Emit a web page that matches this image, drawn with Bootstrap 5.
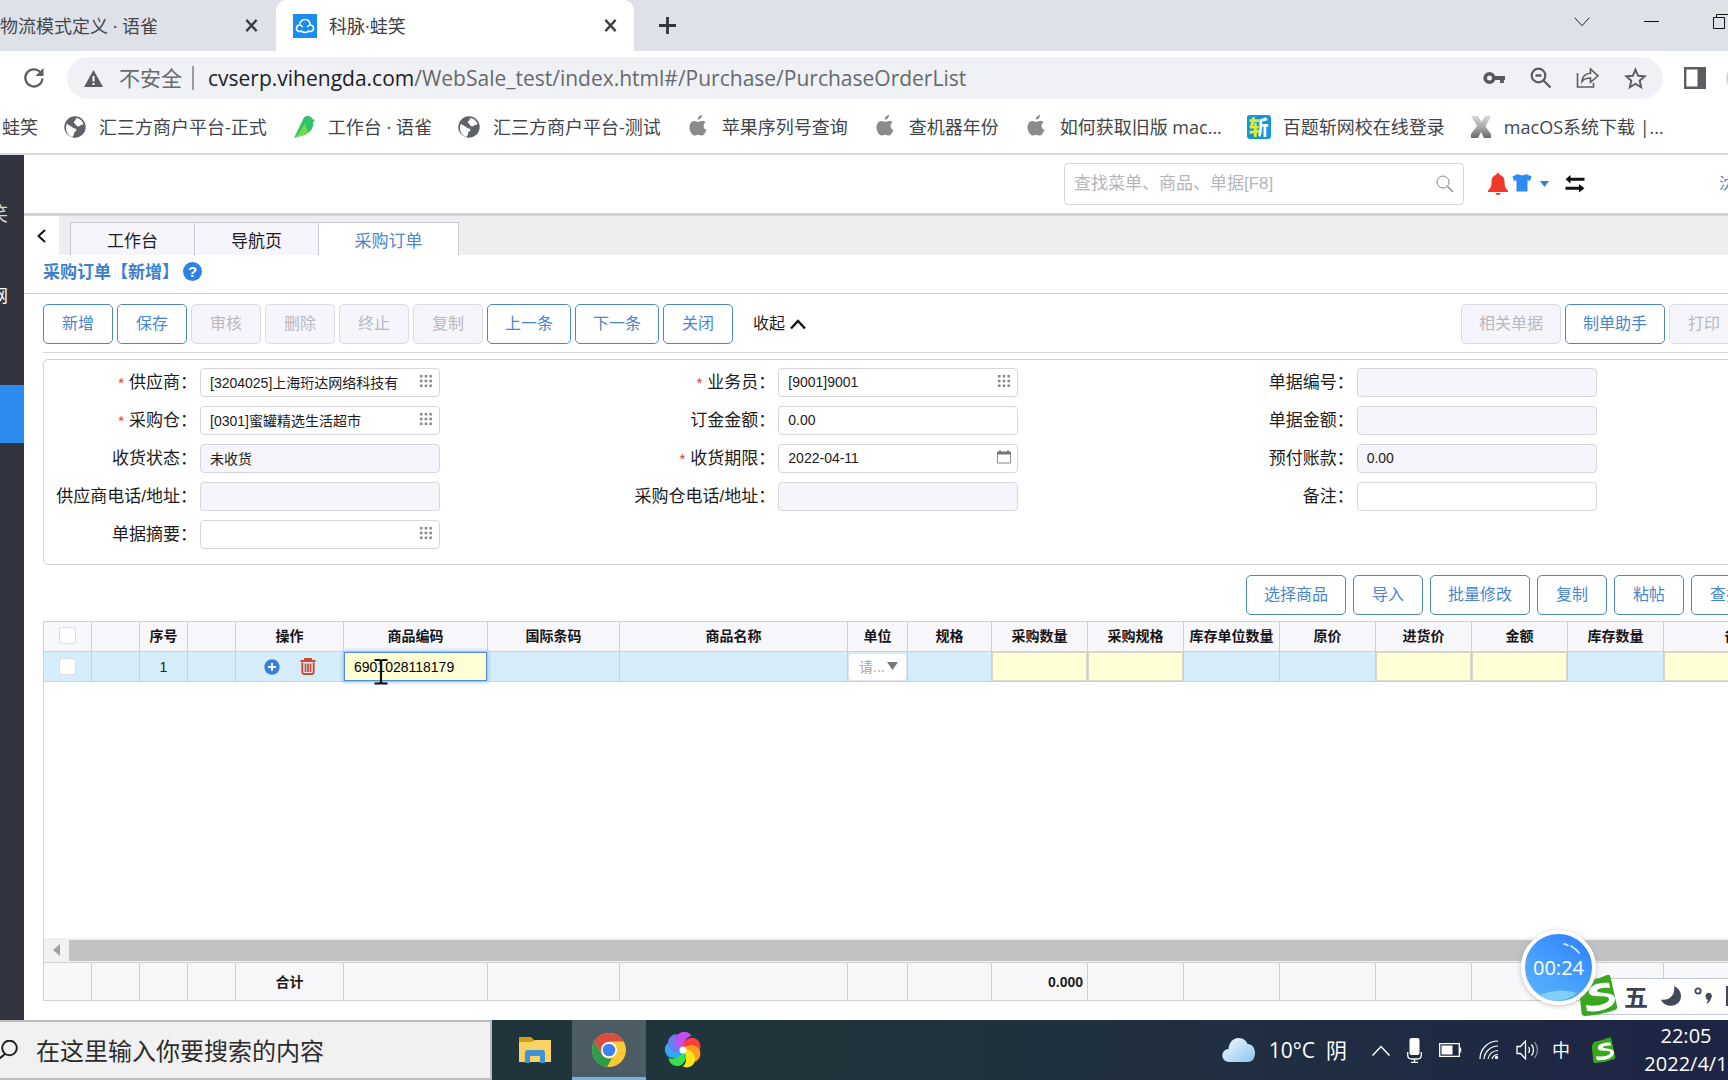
<!DOCTYPE html>
<html lang="zh-CN">
<head>
<meta charset="utf-8">
<meta name="viewport" content="width=device-width, initial-scale=1">
<title>科脉·蛙笑</title>
<link href="https://cdn.jsdelivr.net/npm/bootstrap@5.3.0/dist/css/bootstrap.min.css" rel="stylesheet">
<style>
:root{--ui:"Open Sans","Noto Sans CJK SC",sans-serif;--app:"Liberation Sans","Noto Sans CJK SC",sans-serif;--blue:#4a86cf;--line:#d0d0d6}
body{height:100vh;min-height:720px;overflow:hidden;font-family:var(--app);font-size:16px;line-height:24px;color:#1c1c20;background:#fff}
svg{display:block;flex:none}
button.bare{border:0;background:none;padding:0;color:inherit;display:flex;align-items:center;justify-content:center}
a{color:inherit;text-decoration:none}
/* browser frame */
.tabstrip{height:51px;background:#dee1e8;font:18px/24px var(--ui);color:#44474c}
.tabstrip .site{height:51px}
.tabstrip .site.first{width:276px;padding-right:17px}
.tabstrip .site.current{width:358px;background:#fff;border-radius:11px 11px 0 0;padding:0 16px 0 17px;color:#3c4043}
.tabstrip .wins{gap:54px}
.favico{width:24px;height:24px;background:#1a8df0}
.urlrow{height:54px;font:21px/28px var(--ui)}
.urlrow .reload{margin:0 21px 0 22px}
.omni{height:42px;border-radius:21px;background:#f0f1f4;margin-right:21px;padding:0 16px 0 17px}
.omni .rule{width:2px;height:24px;background:#9a9da1;margin:0 14px 0 10px}
.omni .host{color:#202124}
.omni .addr{color:#66696d;white-space:nowrap}
.marks{height:50px;gap:25px;border-bottom:2px solid #d9d9da;font:18px/24px var(--ui);color:#414549;white-space:nowrap;overflow:hidden;padding:0 0 4px 2px}
.marks a{display:flex;align-items:center;gap:12px}
.zhan{width:24px;height:24px;border-radius:3px;background:#1497d8;font:900 20px/24px "Noto Sans CJK SC",sans-serif;text-align:center}
.zhan span{background:linear-gradient(90deg,#d9ee3a 50%,#fff 50%);-webkit-background-clip:text;background-clip:text;color:transparent}
/* application */
.rail{width:24px;background:#32353f;color:#fff;overflow:hidden;flex:none}
.rail a{display:flex;justify-content:flex-end;align-items:center;height:58px;padding-right:16px;font-size:17px;white-space:nowrap}
.rail .brand{margin-top:31px;font-size:19px;color:#d5d6da}
.rail .net{margin-top:24px}
.rail .on{background:#2d8cf0;margin-top:59px}
.stage{min-width:0;overflow:hidden}
.topbar{height:58px;background:#fff}
.finder{width:400px;height:42px;border:1px solid #d4d4da;border-radius:4px;padding:0 9px 0 8px}
.finder input{border:0;outline:0;background:none;font-size:17px;width:100%;min-width:0;color:#333;padding:0 1px}
.finder input::placeholder{color:#b4b4ba;opacity:1}
.topbar .who{width:9px;color:#4a86cf;margin-left:134px;flex:none;overflow:hidden}
.worktabs{height:42px;background:#f0edf1;border-top:3px solid #d3d1d4;font-size:17px}
.worktabs .back{width:35px;background:#fff;margin-right:11px}
.worktabs .wt{height:33px;align-self:flex-end;width:124px;padding-top:5px;border:1px solid #c9c7cf;border-bottom:0;border-right:0;background:#f6f5fb;display:flex;align-items:center;justify-content:center;color:#1c1c20}
.worktabs .wt.on{width:141px;background:#fff;border-right:1px solid #c9c7cf;color:var(--blue)}
.titlebar{height:39px;border-bottom:1px solid var(--line);padding:0 0 2px 19px;font-size:17px;font-weight:700;color:#3c80cc}
.help{width:19px;height:19px;border-radius:50%;background:#2f82e4;color:#fff;font:700 15px/19px var(--app);text-align:center;margin:0 0 3px 4px}
.bench{margin:0 -52px 0 19px;min-height:0}
.act{height:40px;min-width:70px;padding:0 17px;border:1px solid #5088b5;border-radius:5px;background:#fff;color:var(--blue);font-size:16px;line-height:24px;--bs-btn-disabled-opacity:1}
.act:disabled{border-color:#dcdbe2;background:#f6f5fb;color:#b9b8c0}
.tools{padding:10px 41px 8px 0;border-bottom:1px solid #dadade;gap:4px}
.sheet{margin-top:6px;border:1px solid var(--line);border-radius:5px;padding:8px 0 15px}
.fields{display:flex;flex-direction:column;gap:9px}
.fld{display:flex;align-items:center;height:29px}
.fld label{width:156px;padding-right:3px;text-align:right;font-size:17px;white-space:nowrap;flex:none}
.fld label i{color:#c8412f;font-style:normal;font-size:15px;margin-right:5px}
.inp{position:relative;width:240px}
.inp input{display:block;width:100%;height:29px;border:1px solid #d7d6dd;border-radius:4px;padding:0 30px 2px 9px;font-size:14px;line-height:20px;color:#1c1c20;background:#fff;outline:0}
.inp input:read-only{background:#f6f5fb}
.inp button{position:absolute;right:7px;top:6px}
.tools2{gap:7px;padding:10px 19px 6px 0}
.gridbox{border:1px solid var(--line);border-right:0;margin-bottom:19px;min-height:0;overflow:hidden}
.gt{width:1770px;table-layout:fixed;border-collapse:separate;border-spacing:0;font-size:14px;line-height:20px;flex:none}
.gt th,.gt td{height:30px;padding:0;text-align:center;border-right:1px solid #cfced6;border-bottom:1px solid #cfced6;white-space:nowrap}
.gt th{background:#f8f7fb;font-weight:700;color:#141418;padding-bottom:2px}
.gt tbody td{background:#d6edfc}
.gt tbody td.ed{background:#feffd5}
.gt.sum tbody td{height:37px;background:#f8f7fa;font-weight:700;border-bottom:0}
.gt input[type=checkbox]{appearance:none;display:block;margin:0 auto;width:17px;height:17px;border:1px solid #dddde2;border-radius:3px;background:#fff}
.gt td.ed input{display:block;width:100%;height:29px;border:1px solid #d9d9cf;background:#feffd5;padding:0 9px;font-size:14px;outline:0}
.gt td.ed input.live{border:1px solid #4f8ed0;box-shadow:0 0 4px 1px #8fc4f4;position:relative}
.unit{position:relative}
.unit select{appearance:none;display:block;width:100%;height:28px;border:1px solid #e2e2e8;border-radius:4px;background:#fff;color:#a5a5ad;font-size:14px;padding:0 0 0 10px}
.unit svg{position:absolute;right:9px;top:9px;pointer-events:none}
.hbar{height:25px;background:#f1f0f2;border-bottom:1px solid var(--line);flex:none}
.hbar button{width:25px}
.hbar .thumb{height:21px;background:#c1c1c1}
/* desktop */
.taskbar{height:60px;background:linear-gradient(90deg,#20343b,#20343b 45%,#1f2c42 80%,#1d2445);color:#fff;font:21px/28px var(--ui);flex:none}
.seek{width:492px;background:#f1f1f1;border:2px solid #bdbdbd;border-left:0;margin-right:6px}
.seek input{border:0;background:none;outline:0;width:100%;font:24px/30px var(--ui);padding:2px 0 0 2px}
.seek input::placeholder{color:#2c2c2c;opacity:1}
.task{height:60px;width:74px}
.task.on{background:#4c5c65;border-bottom:3px solid #76b2e0!important;padding-top:3px!important}
.tray{gap:17px}
.tray .temp{margin:0 8px 0 -4px}
.tray .lang{font-size:18px;margin:0 4px 0 -4px}
.clock{font:20px/28px var(--ui);width:84px;text-align:center;white-space:nowrap;margin-left:11px}
.ime{position:absolute;left:1590px;bottom:65px;right:0;height:37px;background:#fff;border:1px solid #c4cad2;border-right:0;color:#3f4252;overflow:hidden;padding:0 0 2px 33px;gap:12px;font:700 24px/32px "Noto Sans CJK SC",sans-serif}
.imelogo{position:absolute;left:1578px;bottom:64px}
.timer{position:absolute;left:1521px;bottom:75px;width:75px;height:75px;border-radius:50%;border:4px solid #fff;background:linear-gradient(215deg,#2c7dff,#4ba3fd 60%,#5bb4fd);box-shadow:0 1px 5px #8888;color:#fff;font:20px/67px var(--ui);text-align:center}
.timer svg{position:absolute;left:0;top:0}
.caret-pic{position:absolute;left:373px;top:658px}
</style>
<script src="https://cdn.jsdelivr.net/npm/bootstrap@5.3.0/dist/js/bootstrap.bundle.min.js"></script>
</head>
<body class="d-flex flex-column position-relative">
<svg width="0" height="0" class="position-absolute" aria-hidden="true"><defs>
<symbol id="x" viewBox="0 0 16 16"><path d="M2.500 2l11 12M13.500 2l-11 12" stroke="#3a3d42" stroke-width="2.400" fill="none"/></symbol>
<symbol id="globe" viewBox="0 0 24 24"><circle cx="12" cy="12" r="10.700" fill="#5f6368"/><path d="M4 7.500C7 8 8 10 10 10.500c2 .5 3.500 1 3.500 3s-2.500 2-2.500 4-1 3-2 3.500C5 19.500 3 16 3 12q0-2.500 1-4.500z" fill="#fff" transform="translate(0 1)"/><path d="M13 3c3.500.3 6.500 2.500 7.500 6-1.500 1.500-3 .5-4 2-1 .8-3 .5-3.500-1s-2.500-1.500-2-3 2-1.500 2-4z" fill="#fff"/><path d="M5 6c2 0 3 2.500 5.500 3.200S14 12 15.500 12s3-.5 4.500.5c-.5 4-3 6.500-6 7.500.5-2 1.500-3 1-4.500s-3-2-4.500-2.500S7 10 4.500 9.500z" fill="#5f6368"/></symbol>
<symbol id="apple" viewBox="0 0 24 24"><path d="M16 0c.2 2.400-1.900 4.700-4.200 4.600C11.500 2.300 13.800.200 16 0zM19.500 7.500c-2.900 1.700-2.500 6.100.9 7.400-.9 2.500-2.700 5.600-4.600 5.600-1.400 0-1.900-.8-3.600-.8s-2.200.8-3.600.8C5.800 20.500 3 15.200 3.500 11.100c.4-3.300 2.800-5.100 5.200-5.100 1.500 0 2.500.9 3.600.9 1.100 0 2.400-1.200 4.500-1.100 1 .1 2 .7 2.700 1.700z" fill="#8b8b8d"/></symbol>
<symbol id="dots" viewBox="0 0 14 14"><g fill="#85858b"><path d="M1 1h2.500v2.500H1zM5.700 1h2.500v2.500H5.700zM10.400 1h2.500v2.500h-2.500zM1 5.700h2.500v2.500H1zM5.700 5.700h2.500v2.500H5.700zM10.400 5.700h2.500v2.500h-2.500zM1 10.400h2.500v2.500H1zM5.700 10.400h2.500v2.500H5.700zM10.400 10.400h2.500v2.500h-2.500z"/></g></symbol>
<symbol id="sogou" viewBox="0 0 40 42"><path d="M5 8Q18 6 29 1q3-1 3.500 2L39 32q.5 3-2 4-14 5-30 6-3 0-3.500-3L1 14z" fill="#3aa81f"/><path d="M31 9C21 8 9 12 11 19c2 6 20 1 20 6 0 5-13 8-23 6l1 6c12 2 28-3 28-12 0-8-17-5-18-8 0-3 8-4 13-3z" fill="#fff"/></symbol>
</defs></svg>

<nav class="tabstrip d-flex" aria-label="浏览器标签">
  <div class="site first d-flex align-items-center justify-content-between"><span class="text-nowrap">物流模式定义 · 语雀</span><button class="bare" aria-label="关闭"><svg width="15" height="15"><use href="#x"/></svg></button></div>
  <div class="site current d-flex align-items-center"><span class="favico me-2"><svg width="24" height="24" viewBox="0 0 24 24"><path d="M8 17.500H6a3.300 3.300 0 0 1 .6-6.500C7 8 9 5.500 12 5.500s5 2.500 5.300 5.500a3.300 3.300 0 0 1 .7 6.500h-2.500M6.600 11c1.300 0 2.200.7 2.700 1.600M12 18.500c-1.700 0-3-.6-4-1.700M17.300 11c-1.200 0-2 .7-2.600 1.600M12 18.500c1.700 0 3-.6 4-1.700" fill="none" stroke="#fff" stroke-width="1.500" stroke-linecap="round"/></svg></span><span class="ms-1 flex-grow-1">科脉·蛙笑</span><button class="bare" aria-label="关闭"><svg width="15" height="15"><use href="#x"/></svg></button></div>
  <button class="bare ms-4" aria-label="新标签页"><svg width="19" height="19" viewBox="0 0 19 19"><path d="M9.500 1v17M1 9.500h17" stroke="#33363b" stroke-width="2.800"/></svg></button>
  <div class="wins d-flex align-items-center ms-auto pb-2">
    <button class="bare" aria-label="搜索标签"><svg width="16" height="10" viewBox="0 0 16 10"><path d="M.7.700l7.300 8 7.300-8" fill="none" stroke="#222"/></svg></button>
    <button class="bare" aria-label="最小化"><svg width="15" height="2"><path d="M0 .500h15" stroke="#111"/></svg></button>
    <button class="bare" aria-label="还原"><svg width="15" height="15" viewBox="0 0 15 15"><path d="M.500 3.500h11v11H.500zM3.500 3V.500H15" fill="none" stroke="#111"/></svg></button>
  </div>
</nav>
<div class="urlrow d-flex align-items-center">
  <button class="bare reload" aria-label="刷新"><svg width="24" height="24" viewBox="0 0 24 24"><path d="M20.500 12.500A8.600 8.600 0 1 1 18 5.800" fill="none" stroke="#5a5d61" stroke-width="2.200"/><path d="M21.500 2v8h-8z" fill="#5a5d61"/></svg></button>
  <div class="omni d-flex align-items-center flex-grow-1">
    <svg width="19" height="19" viewBox="0 0 19 19"><path d="M9.500 1L19 18H0z" fill="#5a5d61"/><path d="M9.500 7v5.500M9.500 14v2" stroke="#fff" stroke-width="2"/></svg>
    <span class="ms-3 text-nowrap addr">不安全</span><span class="rule"></span>
    <div class="addr flex-grow-1" role="textbox" aria-label="地址栏"><span class="host">cvserp.vihengda.com</span>/WebSale_test/index.html#/Purchase/PurchaseOrderList</div>
    <div class="d-flex align-items-center gap-4">
      <button class="bare" aria-label="密码"><svg width="23" height="14" viewBox="0 0 23 14"><circle cx="6.500" cy="7" r="4.300" fill="none" stroke="#55585c" stroke-width="3.600"/><path d="M11 7h11M19 7v5" stroke="#55585c" stroke-width="3.800"/></svg></button>
      <button class="bare" aria-label="缩放"><svg width="22" height="22" viewBox="0 0 22 22"><circle cx="8.500" cy="8.500" r="6.800" fill="none" stroke="#5a5d61" stroke-width="2.200"/><path d="M5.500 8.500h6M13.500 13.500l7 7" stroke="#5a5d61" stroke-width="2.300"/></svg></button>
      <button class="bare" aria-label="分享"><svg width="24" height="24" viewBox="0 0 24 24"><path d="M1.500 7v14h16v-4M6 15.500c.5-5.500 4-8 8.500-8.200V3l7.500 6.800-7.500 6.500v-4.300C11 12 8 13 6 15.500z" fill="none" stroke="#5a5d61" stroke-width="1.600"/></svg></button>
      <button class="bare" aria-label="收藏"><svg width="23" height="23" viewBox="0 0 24 24"><path d="M12 2.700l2.700 6.400 6.900.6-5.200 4.600 1.500 6.800-5.900-3.600-5.900 3.600 1.500-6.800L2.400 9.700l6.900-.6z" fill="none" stroke="#5a5d61" stroke-width="2"/></svg></button>
    </div>
  </div>
  <button class="bare" aria-label="侧边栏"><svg width="22" height="22" viewBox="0 0 22 22"><path d="M1.200 1.200h19.600v19.600H1.200z" fill="#fff" stroke="#5a5d61" stroke-width="2.400"/><path d="M13.500 1H21v20h-7.500z" fill="#5a5d61"/></svg></button>
  <svg class="ms-3 ps-1" width="6" height="22" viewBox="0 0 2 22"><circle cx="13" cy="11" r="13" fill="#d5d7da"/></svg>
</div>
<nav class="marks d-flex align-items-center" aria-label="书签">
  <a href="#"><span>蛙笑</span></a>
  <a href="#"><svg width="24" height="24"><use href="#globe"/></svg>汇三方商户平台-正式</a>
  <a href="#"><svg width="24" height="24" viewBox="0 0 24 24"><path d="M12 2.500C15 0 19 1 20.500 4l2.500 1-2 2.500c.5 4-1 8-5 10.500-3 2-6 2.500-8 3l-6 2z" fill="#2fc46c"/><path d="M2 23C8 18 10 13 13 8c1 5 3 6 3 10-3 3-8 3-14 5z" fill="#6fdc4b"/></svg>工作台 · 语雀</a>
  <a href="#"><svg width="24" height="24"><use href="#globe"/></svg>汇三方商户平台-测试</a>
  <a href="#"><svg width="24" height="24"><use href="#apple"/></svg>苹果序列号查询</a>
  <a href="#"><svg width="24" height="24"><use href="#apple"/></svg>查机器年份</a>
  <a href="#"><svg width="24" height="24"><use href="#apple"/></svg>如何获取旧版 mac...</a>
  <a href="#"><span class="zhan"><span>斩</span></span>百题斩网校在线登录</a>
  <a href="#"><svg width="22" height="24" viewBox="0 0 22 24"><defs><linearGradient id="g" x1="0" y1="0" x2="0" y2="1"><stop offset="0" stop-color="#d8d8d8"/><stop offset=".5" stop-color="#a8a8a8"/><stop offset="1" stop-color="#6a6a6a"/></linearGradient></defs><path d="M1 1h7l3.500 6L15 1h6l-5.500 10.500L21 19v4h-7l-3-6-3 6H1v-4l6-8z" fill="url(#g)"/></svg>macOS系统下载 |...</a>
</nav>

<main class="d-flex flex-grow-1" style="min-height:0">
  <nav class="rail" aria-label="主菜单"><a href="#" class="brand">笑</a><a href="#" class="net">网</a><a href="#" class="on" aria-label="采购"></a></nav>
  <div class="stage d-flex flex-column flex-grow-1">
    <header class="topbar d-flex align-items-center justify-content-end">
      <div class="finder d-flex align-items-center"><input type="text" aria-label="查找" placeholder="查找菜单、商品、单据[F8]"><button class="bare" aria-label="搜索"><svg width="18" height="18" viewBox="0 0 18 18"><circle cx="7" cy="7" r="6" fill="none" stroke="#888"/><path d="M11.500 11.500l5.500 5.500" stroke="#888" stroke-width="1.400"/></svg></button></div>
      <button class="bare ms-4" aria-label="通知"><svg width="20" height="22" viewBox="0 0 20 22"><path d="M10 0c1 0 1.700.8 1.700 1.700C15 2.500 16.500 5 16.500 8.500c0 5 1 7 3.500 9V19H0v-1.500c2.500-2 3.500-4 3.500-9C3.500 5 5 2.500 8.300 1.700 8.300.8 9 0 10 0zM7.500 20h5c0 1.200-1 2-2.500 2s-2.500-.8-2.500-2z" fill="#f2382c"/></svg></button>
      <button class="bare ms-1 pb-1" aria-label="皮肤"><svg width="20" height="19" viewBox="0 0 20 19"><path d="M6 1c1.500 1.800 6.500 1.800 8 0l5.500 2.500L18 8l-2.500-.8V18.500h-11V7.200L2 8 .500 3.500z" fill="#2d8cf0"/></svg></button>
      <svg class="ms-2" width="9" height="6" viewBox="0 0 9 6"><path d="M0 0h9L4.500 6z" fill="#2d83df"/></svg>
      <button class="bare ms-3" aria-label="切换"><svg width="20" height="18" viewBox="0 0 20 18"><path d="M5.500 0v2.800h14v3h-14v2.800L.500 4.300zM14 9v2.800H.500v3H14v2.800l5.500-4.300z" fill="#111"/></svg></button>
      <a href="#" class="who">沈</a>
    </header>
    <div class="worktabs d-flex">
      <button class="bare back" aria-label="向左"><svg width="9" height="14" viewBox="0 0 9 14"><path d="M8 1L1.500 7 8 13" fill="none" stroke="#111" stroke-width="2"/></svg></button>
      <a href="#" class="wt">工作台</a><a href="#" class="wt">导航页</a><a href="#" class="wt on">采购订单</a>
    </div>
    <div class="titlebar d-flex align-items-center"><span>采购订单【新增】</span><span class="help">?</span></div>
    <div class="bench d-flex flex-column flex-grow-1">
      <div class="tools d-flex align-items-center">
        <button class="btn act">新增</button><button class="btn act">保存</button><button class="btn act" disabled>审核</button><button class="btn act" disabled>删除</button><button class="btn act" disabled>终止</button><button class="btn act" disabled>复制</button><button class="btn act">上一条</button><button class="btn act">下一条</button><button class="btn act">关闭</button>
        <button class="bare ms-3 gap-1 me-auto">收起<svg width="18" height="12" viewBox="0 0 18 12"><path d="M2 10.500l7-7.500 7 7.500" fill="none" stroke="#111" stroke-width="2.400"/></svg></button>
        <button class="btn act" disabled>相关单据</button><button class="btn act">制单助手</button><button class="btn act" disabled>打印</button>
      </div>
      <form class="sheet row g-0 mx-0">
        <div class="col-4 fields">
          <div class="fld"><label for="f1"><i>*</i>供应商：</label><div class="inp"><input id="f1" value="[3204025]上海珩达网络科技有"><button type="button" class="bare" aria-label="选择"><svg width="14" height="14"><use href="#dots"/></svg></button></div></div>
          <div class="fld"><label for="f2"><i>*</i>采购仓：</label><div class="inp"><input id="f2" value="[0301]蜜罐精选生活超市"><button type="button" class="bare" aria-label="选择"><svg width="14" height="14"><use href="#dots"/></svg></button></div></div>
          <div class="fld"><label for="f3">收货状态：</label><div class="inp"><input id="f3" value="未收货" readonly></div></div>
          <div class="fld"><label for="f4">供应商电话/地址：</label><div class="inp"><input id="f4" readonly></div></div>
          <div class="fld"><label for="f5">单据摘要：</label><div class="inp"><input id="f5"><button type="button" class="bare" aria-label="选择"><svg width="14" height="14"><use href="#dots"/></svg></button></div></div>
        </div>
        <div class="col-4 fields">
          <div class="fld"><label for="f6"><i>*</i>业务员：</label><div class="inp"><input id="f6" value="[9001]9001"><button type="button" class="bare" aria-label="选择"><svg width="14" height="14"><use href="#dots"/></svg></button></div></div>
          <div class="fld"><label for="f7">订金金额：</label><div class="inp"><input id="f7" value="0.00"></div></div>
          <div class="fld"><label for="f8"><i>*</i>收货期限：</label><div class="inp"><input id="f8" value="2022-04-11"><button type="button" class="bare" aria-label="日历"><svg width="14" height="14" viewBox="0 0 14 14"><path d="M.500 2.500h13v10.500H.500z" fill="#fff" stroke="#8a8a90"/><path d="M0 1.500h14v3H0zM2 .500h2v1H2zM10 .500h2v1h-2z" fill="#77777d"/></svg></button></div></div>
          <div class="fld"><label for="f9">采购仓电话/地址：</label><div class="inp"><input id="f9" readonly></div></div>
        </div>
        <div class="col-4 fields">
          <div class="fld"><label for="f10">单据编号：</label><div class="inp"><input id="f10" readonly></div></div>
          <div class="fld"><label for="f11">单据金额：</label><div class="inp"><input id="f11" readonly></div></div>
          <div class="fld"><label for="f12">预付账款：</label><div class="inp"><input id="f12" value="0.00" readonly></div></div>
          <div class="fld"><label for="f13">备注：</label><div class="inp"><input id="f13"></div></div>
        </div>
      </form>
      <div class="tools2 d-flex justify-content-end">
        <button class="btn act">选择商品</button><button class="btn act">导入</button><button class="btn act">批量修改</button><button class="btn act">复制</button><button class="btn act">粘帖</button><button class="btn act">查找</button>
      </div>
      <div class="gridbox d-flex flex-column flex-grow-1">
        <table class="gt">
          <colgroup><col span="4" width="48"><col width="108"><col width="144"><col width="132"><col width="228"><col width="60"><col width="84"><col span="7" width="96"><col></colgroup>
          <thead><tr><th><input type="checkbox" aria-label="全选"></th><th></th><th>序号</th><th></th><th>操作</th><th>商品编码</th><th>国际条码</th><th>商品名称</th><th>单位</th><th>规格</th><th>采购数量</th><th>采购规格</th><th>库存单位数量</th><th>原价</th><th>进货价</th><th>金额</th><th>库存数量</th><th>备注</th></tr></thead>
          <tbody><tr><td><input type="checkbox" aria-label="选择行"></td><td></td><td>1</td><td></td>
            <td><div class="d-flex justify-content-center gap-3"><button class="bare me-1" aria-label="添加"><svg width="16" height="16" viewBox="0 0 16 16"><circle cx="8" cy="8" r="7.700" fill="#3a7fdc"/><path d="M8 4v8M4 8h8" stroke="#fff" stroke-width="1.800"/></svg></button><button class="bare" aria-label="删除"><svg width="16" height="17" viewBox="0 0 16 17"><path d="M.500 3h15M5 3V1h6v2M2.300 4.500V14q0 2 2 2h7.400q2 0 2-2V4.500" fill="none" stroke="#d4452f" stroke-width="1.900"/><path d="M5.500 5.500V14M8 5.500V14M10.500 5.500V14" stroke="#d4452f" stroke-width="1.700"/></svg></button></div></td>
            <td class="ed"><input class="live" aria-label="商品编码" value="6901028118179"></td><td></td><td></td>
            <td><div class="unit"><select aria-label="单位"><option>请...</option></select><svg width="11" height="8" viewBox="0 0 11 8"><path d="M0 0h11L5.500 8z" fill="#77777f"/></svg></div></td>
            <td></td><td class="ed"><input aria-label="采购数量"></td><td class="ed"><input aria-label="采购规格"></td><td></td><td></td><td class="ed"><input aria-label="进货价"></td><td class="ed"><input aria-label="金额"></td><td></td><td class="ed"><input aria-label="备注"></td></tr></tbody>
        </table>
        <div class="flex-grow-1"></div>
        <div class="hbar d-flex align-items-center"><button class="bare" aria-label="向左滚动"><svg width="7" height="12" viewBox="0 0 7 12"><path d="M7 0v12L0 6z" fill="#a0a0a0"/></svg></button><div class="thumb flex-grow-1"></div></div>
        <table class="gt sum">
          <colgroup><col span="4" width="48"><col width="108"><col width="144"><col width="132"><col width="228"><col width="60"><col width="84"><col span="7" width="96"><col></colgroup>
          <tbody><tr><td></td><td></td><td></td><td></td><td>合计</td><td></td><td></td><td></td><td></td><td></td><td class="text-end pe-1">0.000</td><td></td><td></td><td></td><td></td><td></td><td></td><td></td></tr></tbody>
        </table>
      </div>
    </div>
  </div>
</main>

<footer class="taskbar d-flex align-items-center">
  <div class="seek d-flex align-items-center align-self-stretch"><svg width="18" height="20" viewBox="0 0 18 20"><circle cx="9.500" cy="8" r="7.300" fill="none" stroke="#222" stroke-width="2"/><path d="M5 14l-6 5" stroke="#222" stroke-width="2"/></svg><input class="ms-3" type="text" aria-label="搜索" placeholder="在这里输入你要搜索的内容"></div>
  <button class="bare task" aria-label="文件资源管理器"><svg width="34" height="28" viewBox="0 0 34 28"><path d="M1 1h12l3 3v6H1z" fill="#d69e14"/><path d="M1 6h13l3-2h16v22H1z" fill="#fbd264"/><path d="M7 27V17q0-3 3-3h14q3 0 3 3v10h-5v-7h-10v7z" fill="#3f93d2"/></svg></button>
  <button class="bare task on" aria-label="Chrome"><svg width="36" height="36" viewBox="-18 -18 36 36"><circle r="17" fill="#fbc934"/><path d="M-14.700-8.500A17 17 0 0 1 14.700-8.500H0L-7.400 4.200z" fill="#dd4b3e"/><path d="M-14.700-8.500L-7.400 4.200A8.500 8.500 0 0 0 3 8L-2 16.900A17 17 0 0 1-14.700-8.500z" fill="#2a9d4e"/><circle r="8" fill="#fff"/><circle r="6.300" fill="#3f80ea"/></svg></button>
  <button class="bare task" aria-label="浏览器"><svg width="38" height="38" viewBox="-19 -19 38 38"><defs><path id="p" d="M0 0C-5-1-9-6-6.500-13-4-19 5-20 8.500-14 4-14-1-8 0 0z"/></defs><use href="#p" fill="#c44df0"/><use href="#p" fill="#ff3f3c" transform="rotate(60)"/><use href="#p" fill="#ff9d1e" transform="rotate(105)"/><use href="#p" fill="#f9e61c" transform="rotate(150)"/><use href="#p" fill="#35e04e" transform="rotate(210)"/><use href="#p" fill="#35a7f2" transform="rotate(265)"/><use href="#p" fill="#6a7bf5" transform="rotate(310)"/><use href="#p" fill="#c44df0"/><circle r="3.500" fill="#fff"/></svg></button>
  <div class="tray d-flex align-items-center ms-auto">
    <svg width="34" height="26" viewBox="0 0 34 26"><defs><linearGradient id="cl" x1="0" y1="0" x2="1" y2="1"><stop offset="0" stop-color="#f4fbff"/><stop offset="1" stop-color="#8cc3ee"/></linearGradient></defs><path d="M7 25a6.500 6.500 0 0 1-.5-13C7 6 10.500 1 16.500 1c5 0 8 3 9 6 5 0 7.500 4 7.500 9s-2.500 9-7 9z" fill="url(#cl)"/></svg>
    <span class="text-nowrap temp">10°C&nbsp; 阴</span>
    <svg width="18" height="11" viewBox="0 0 18 11"><path d="M.500 10.500L9 1.500l8.500 9" fill="none" stroke="#fff" stroke-width="1.500"/></svg>
    <svg width="15" height="25" viewBox="0 0 15 25"><rect x="2.500" width="10" height="17" rx="2" fill="#fff"/><path d="M.700 14v3q0 4 4 4h5.600q4 0 4-4v-3M7.500 21v3M4 24.300h7" fill="none" stroke="#fff" stroke-width="1.300"/></svg>
    <svg width="23" height="14" viewBox="0 0 23 14"><path d="M.700.700h19.600v12.600H.700zM21.500 4.500v5" fill="none" stroke="#fff" stroke-width="1.300"/><path d="M2.500 2.500h11v9h-11z" fill="#fff"/></svg>
    <svg width="20" height="20" viewBox="0 0 20 20"><g fill="none" stroke="#fff" stroke-width="1.200"><path d="M1 19A18 18 0 0 1 19 1M5 19A14 14 0 0 1 19 6M9 19a10 10 0 0 1 10-8.500M13 19a6.500 6.500 0 0 1 6-4.500"/></g><circle cx="17.500" cy="17.500" r="1.700" fill="#fff"/></svg>
    <svg width="23" height="20" viewBox="0 0 23 20"><g fill="none" stroke="#fff" stroke-width="1.300"><path d="M1 6.500h3.500L9.500 1v18l-5-5.500H1zM12.500 7q2 3 0 6M15.500 4.500q4 5.500 0 11"/><path d="M18.500 2q6 8 0 16" stroke="#889"/></g></svg>
    <span class="lang">中</span>
    <svg width="25" height="26"><use href="#sogou"/></svg>
    <div class="clock"><div>22:05</div><div>2022/4/1</div></div>
  </div>
</footer>

<svg class="caret-pic" width="16" height="28" viewBox="0 0 16 28"><path d="M1.500 2h4.500q2 0 2 2 0-2 2-2h4.500M8 3v21M1.500 25.500H6q2 0 2-2 0 2 2 2h4.500" fill="none" stroke="#111" stroke-width="2.200"/></svg>
<div class="ime d-flex align-items-center"><span>五</span><svg width="22" height="22" viewBox="0 0 22 22"><path d="M14 1c9 4 9 15 2 18.500C10 22.500 3 20 1 14.500 10 16 15.500 9.500 14 1z" fill="#45485a"/></svg><svg width="20" height="20" viewBox="0 0 20 20"><circle cx="4" cy="5" r="2.700" fill="none" stroke="#45485a" stroke-width="1.800"/><path d="M11.500 10a3.200 3.200 0 1 1 6 1.500q-1 4-4.500 6.500-.5-.5 1-4-2.500-1-2.500-4z" fill="#45485a"/></svg><svg width="24" height="20" viewBox="0 0 24 20"><path d="M1 1h22v18H1zM4 6h16M4 10h16M4 14.500h16" fill="none" stroke="#45485a" stroke-width="2"/></svg></div>
<svg class="imelogo" width="40" height="42"><use href="#sogou"/></svg>
<div class="timer"><svg width="67" height="67" viewBox="0 0 67 67"><path d="M15 61Q34 53 52 59 42 67 30 66.500 22 66 15 61z" fill="#7fd0fb"/><path d="M39 10q2 0 4 1.500M46 12q5 3 8 7" stroke="#cfe8ff" stroke-width="1.800" fill="none" stroke-linecap="round"/></svg><span class="position-relative">00:24</span></div>
</body>
</html>
